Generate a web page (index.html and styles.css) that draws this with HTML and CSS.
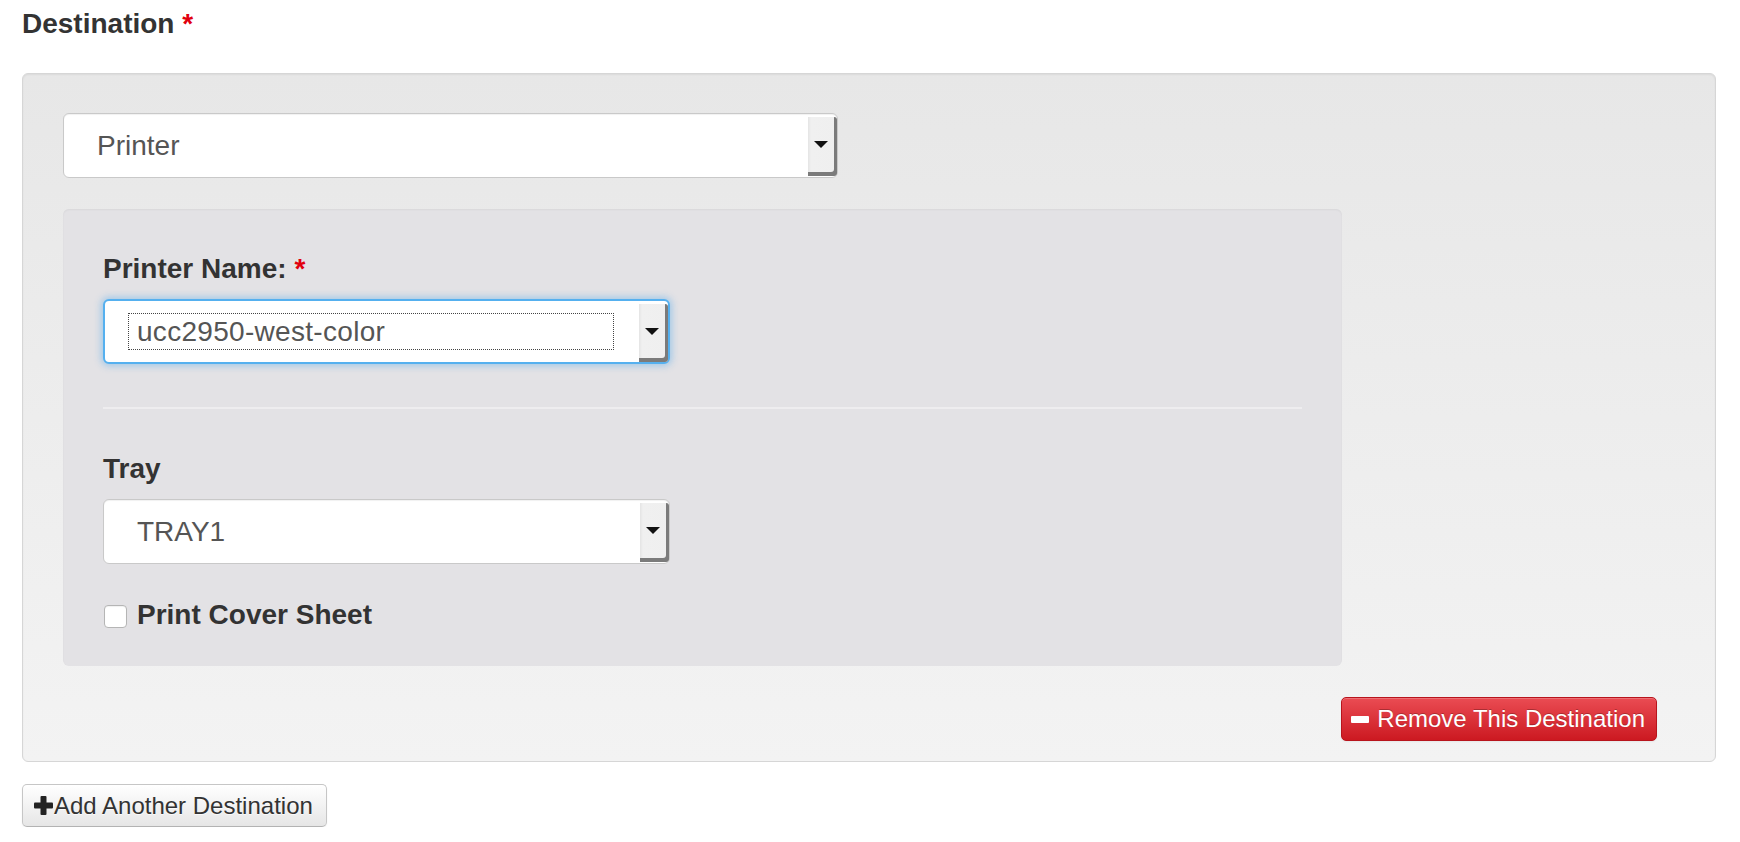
FILE: index.html
```html
<!DOCTYPE html>
<html>
<head>
<meta charset="utf-8">
<link rel="stylesheet" href="styles.css">
</head>
<body>
<div class="page">
  <div class="section-label">Destination <span class="req">*</span></div>
  <div class="well">
    <div class="select select-type">
      <span class="select-value">Printer</span>
      <span class="select-btn"><span class="caret"></span></span>
    </div>
    <div class="panel">
      <div class="field-label">Printer Name: <span class="req">*</span></div>
      <div class="select select-inner is-focused">
        <span class="select-value focus-ring">ucc2950-west-color</span>
        <span class="select-btn"><span class="caret"></span></span>
      </div>
      <div class="divider"></div>
      <div class="field-label">Tray</div>
      <div class="select select-inner">
        <span class="select-value">TRAY1</span>
        <span class="select-btn"><span class="caret"></span></span>
      </div>
      <label class="check-row">
        <span class="checkbox"></span>
        <span class="check-text">Print Cover Sheet</span>
      </label>
    </div>
    <div class="actions">
      <button class="btn btn-danger"><span class="minus"></span>Remove This Destination</button>
    </div>
  </div>
  <button class="btn btn-default"><svg class="plus" width="19" height="19" viewBox="0 0 19 19"><rect x="6.5" y="0" width="6" height="19" rx="1" fill="#222"/><rect x="0" y="6.5" width="19" height="6" rx="1" fill="#222"/></svg>Add Another Destination</button>
</div>
</body>
</html>
```
FILE: styles.css
```css
html, body {
  margin: 0;
  padding: 0;
  background: #ffffff;
}

body {
  font-family: "Liberation Sans", Arial, Helvetica, sans-serif;
  color: #333333;
}

.page {
  padding: 4px 24px 0 22px;
}

.section-label {
  font-size: 28px;
  font-weight: bold;
  line-height: 40px;
  margin-bottom: 29px;
  color: #333;
}

.req {
  color: #e1000f;
}

.well {
  border: 1px solid #d6d6d6;
  border-radius: 6px;
  background: linear-gradient(to bottom, #e7e7e7 0%, #f3f3f3 100%);
  box-shadow: inset 0 1px 2px rgba(0, 0, 0, 0.06);
  padding: 39px 40px 20px 40px;
}

.select {
  box-sizing: border-box;
  height: 65px;
  background: #ffffff;
  border: 1px solid #c9c9c9;
  border-radius: 6px;
  display: flex;
  align-items: stretch;
  font-size: 28px;
  color: #555555;
  box-shadow: inset 0 1px 1px rgba(0, 0, 0, 0.06);
}

.select-type {
  width: 775px;
}

.select-inner {
  width: 567px;
}

.select-value {
  flex: 1;
  padding-left: 33px;
  display: flex;
  align-items: center;
}

.select-btn {
  width: 29px;
  margin: 3px 0 1px 0;
  background: linear-gradient(to right, #e4e4e4 0px, #f0f0f0 3px, #efefef 100%);
  box-shadow: inset -3px -4px 0 #7b7b7b;
  border-radius: 0 3px 3px 0;
  display: flex;
  align-items: center;
  justify-content: center;
  padding: 0 3px 4px 0;
  box-sizing: border-box;
}

.caret {
  width: 0;
  height: 0;
  border-left: 7px solid transparent;
  border-right: 7px solid transparent;
  border-top: 7px solid #111;
}

.is-focused {
  border: 2px solid #55b0ef;
  box-shadow: 0 0 7px 2px rgba(82, 168, 236, 0.45);
}

.is-focused .select-btn {
  margin: 3px 0 0 0;
}

.focus-ring {
  flex: 1;
  margin: 12px 25px 12px 23px;
  padding-left: 8px;
  border: 1px dotted #444;
  letter-spacing: 0.3px;
}

.panel {
  width: 1279px;
  box-sizing: border-box;
  margin-top: 31px;
  background: #e3e2e5;
  border-radius: 6px;
  box-shadow: inset 0 1px 2px rgba(0, 0, 0, 0.05);
  padding: 40px 40px 35px 40px;
}

.field-label {
  font-size: 28px;
  font-weight: bold;
  line-height: 40px;
  margin-bottom: 10px;
  color: #333;
}

.divider {
  height: 2px;
  background: #eeedef;
  margin: 43px 0 40px 0;
}

.check-row {
  display: flex;
  align-items: center;
  height: 32px;
  margin-top: 35px;
  font-size: 28px;
  font-weight: bold;
  color: #333;
}

.checkbox {
  box-sizing: border-box;
  width: 23px;
  height: 23px;
  margin: 3px 10px 0 1px;
  background: #fff;
  border: 1px solid #b5b5b5;
  border-radius: 4px;
  box-shadow: inset 0 1px 1px rgba(0, 0, 0, 0.06);
}

.actions {
  display: flex;
  justify-content: flex-end;
  margin-top: 31px;
  padding-right: 18px;
}

.btn {
  font-family: "Liberation Sans", Arial, Helvetica, sans-serif;
  font-size: 24px;
  box-sizing: border-box;
  display: inline-flex;
  align-items: center;
  border-radius: 5px;
  cursor: pointer;
  margin: 0;
}

.btn-danger {
  height: 44px;
  padding: 0 11px 0 9px;
  color: #ffffff;
  background: linear-gradient(to bottom, #ea4c53 0%, #cc1921 100%);
  border: 1px solid #b8141c;
  text-shadow: 0 -1px 0 rgba(0, 0, 0, 0.25);
  box-shadow: inset 0 1px 0 rgba(255, 255, 255, 0.2), 0 1px 2px rgba(0, 0, 0, 0.05);
}

.minus {
  display: inline-block;
  width: 18px;
  height: 7px;
  background: #ffffff;
  border-radius: 1px;
  margin-right: 8px;
}

.btn-default {
  height: 43px;
  margin-top: 22px;
  padding: 0 13px 0 11px;
  color: #333;
  background: linear-gradient(to bottom, #ffffff 0%, #e6e6e6 100%);
  border: 1px solid #c6c6c6;
  border-bottom-color: #b3b3b3;
  text-shadow: 0 1px 0 rgba(255, 255, 255, 0.75);
  box-shadow: inset 0 1px 0 rgba(255, 255, 255, 0.2), 0 1px 2px rgba(0, 0, 0, 0.05);
}

.plus {
  display: block;
  margin-right: 1px;
}
```
